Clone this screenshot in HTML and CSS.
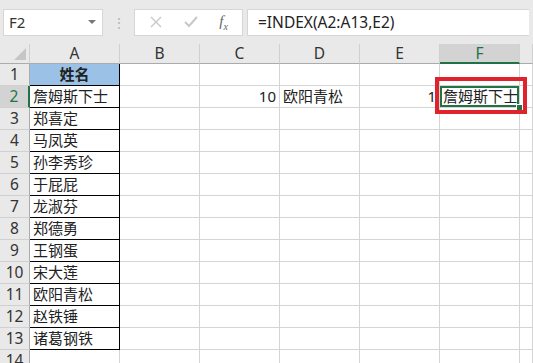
FILE: index.html
```html
<!DOCTYPE html>
<html lang="zh">
<head>
    <meta charset="UTF-8">
    <title>INDEX</title>
    <link rel="stylesheet" href="styles.css">
</head>
<body>
    <div class="bar">
        <div class="namebox">
            <span>F2</span>
            <span class="caret"></span>
        </div>
        <div class="dots">⋮</div>
        <div class="buttons">
            <svg width="14" height="14" viewBox="0 0 14 14"><path d="M2 2 L12 12 M12 2 L2 12" stroke="#c8c8c8" stroke-width="1.4" fill="none"/></svg>
            <svg width="16" height="14" viewBox="0 0 16 14"><path d="M2 7 L6 11 L14 2" stroke="#c8c8c8" stroke-width="2" fill="none"/></svg>
            <span class="fx"><i>f</i><sub>x</sub></span>
        </div>
        <div class="formula">=INDEX(A2:A13,E2)</div>
    </div>

    <div class="sheet">
        <div class="corner"><span class="tri"></span></div>
        <div class="colhead">A</div>
        <div class="colhead">B</div>
        <div class="colhead">C</div>
        <div class="colhead">D</div>
        <div class="colhead">E</div>
        <div class="colhead active">F</div>
        <div class="colhead"></div>

        <div class="rowhead">1</div>
        <div class="cell name title">姓名</div>
        <div class="cell"></div><div class="cell"></div><div class="cell"></div><div class="cell"></div><div class="cell"></div><div class="cell"></div>

        <div class="rowhead active">2</div>
        <div class="cell name">詹姆斯下士</div>
        <div class="cell"></div>
        <div class="cell num">10</div>
        <div class="cell">欧阳青松</div>
        <div class="cell num">1</div>
        <div class="cell selected">詹姆斯下士<span class="handle"></span><span class="mark"></span></div>
        <div class="cell"></div>

        <div class="rowhead">3</div><div class="cell name">郑喜定</div>
        <div class="cell"></div><div class="cell"></div><div class="cell"></div><div class="cell"></div><div class="cell"></div><div class="cell"></div>
        <div class="rowhead">4</div><div class="cell name">马凤英</div>
        <div class="cell"></div><div class="cell"></div><div class="cell"></div><div class="cell"></div><div class="cell"></div><div class="cell"></div>
        <div class="rowhead">5</div><div class="cell name">孙李秀珍</div>
        <div class="cell"></div><div class="cell"></div><div class="cell"></div><div class="cell"></div><div class="cell"></div><div class="cell"></div>
        <div class="rowhead">6</div><div class="cell name">于屁屁</div>
        <div class="cell"></div><div class="cell"></div><div class="cell"></div><div class="cell"></div><div class="cell"></div><div class="cell"></div>
        <div class="rowhead">7</div><div class="cell name">龙淑芬</div>
        <div class="cell"></div><div class="cell"></div><div class="cell"></div><div class="cell"></div><div class="cell"></div><div class="cell"></div>
        <div class="rowhead">8</div><div class="cell name">郑德勇</div>
        <div class="cell"></div><div class="cell"></div><div class="cell"></div><div class="cell"></div><div class="cell"></div><div class="cell"></div>
        <div class="rowhead">9</div><div class="cell name">王钢蛋</div>
        <div class="cell"></div><div class="cell"></div><div class="cell"></div><div class="cell"></div><div class="cell"></div><div class="cell"></div>
        <div class="rowhead">10</div><div class="cell name">宋大莲</div>
        <div class="cell"></div><div class="cell"></div><div class="cell"></div><div class="cell"></div><div class="cell"></div><div class="cell"></div>
        <div class="rowhead">11</div><div class="cell name">欧阳青松</div>
        <div class="cell"></div><div class="cell"></div><div class="cell"></div><div class="cell"></div><div class="cell"></div><div class="cell"></div>
        <div class="rowhead">12</div><div class="cell name">赵铁锤</div>
        <div class="cell"></div><div class="cell"></div><div class="cell"></div><div class="cell"></div><div class="cell"></div><div class="cell"></div>
        <div class="rowhead">13</div><div class="cell name">诸葛钢铁</div>
        <div class="cell"></div><div class="cell"></div><div class="cell"></div><div class="cell"></div><div class="cell"></div><div class="cell"></div>
        <div class="rowhead">14</div>
        <div class="cell"></div><div class="cell"></div><div class="cell"></div><div class="cell"></div><div class="cell"></div><div class="cell"></div><div class="cell"></div>
    </div>
</body>
</html>
```

FILE: styles.css
```css
body {
    margin: 0;
    width: 533px;
    height: 363px;
    overflow: hidden;
    background-color: #fff;
    font-family: 'Noto Sans', 'Noto Sans CJK SC', sans-serif;
    color: #222;
}

.bar {
    display: flex;
    align-items: center;
    height: 44px;
    padding: 0 0 0 3px;
    background-color: #e9e9e9;
    box-sizing: border-box;
}

.namebox {
    display: flex;
    align-items: center;
    justify-content: space-between;
    width: 100px;
    height: 27px;
    padding: 0 6px 0 5px;
    box-sizing: border-box;
    background-color: #fff;
    border: 1px solid #d6d6d6;
    font-size: 15px;
    color: #333;
}

    .namebox .caret {
        width: 0;
        height: 0;
        border-left: 4px solid transparent;
        border-right: 4px solid transparent;
        border-top: 4px solid #777;
    }

.dots {
    width: 31px;
    text-align: center;
    color: #b5b5b5;
    font-size: 14px;
}

.buttons {
    display: flex;
    align-items: center;
    justify-content: space-around;
    width: 109px;
    height: 27px;
    box-sizing: border-box;
    background-color: #fff;
    border: 1px solid #d6d6d6;
    padding: 0 4px;
}

.fx {
    font-family: 'Liberation Serif', serif;
    font-size: 15px;
    color: #666;
}

    .fx sub {
        font-size: 10px;
        font-style: italic;
    }

.formula {
    flex: 1;
    height: 27px;
    margin: 0 4px 0 4px;
    padding-left: 10px;
    box-sizing: border-box;
    background-color: #fff;
    border: 1px solid #d6d6d6;
    border-right: none;
    font-size: 15.5px;
    line-height: 25px;
    color: #222;
}

.sheet {
    display: grid;
    grid-template-columns: 30px 90px 80px 80px 80px 80px 80px 13px;
    grid-template-rows: 20px repeat(14, 22px);
    font-size: 15px;
}

.corner {
    position: relative;
    background-color: #e9e9e9;
    border-bottom: 1px solid #ababab;
    border-right: 1px solid #d0d0d0;
}

    .corner .tri {
        position: absolute;
        right: 3px;
        bottom: 3px;
        width: 0;
        height: 0;
        border-left: 12px solid transparent;
        border-bottom: 12px solid #c6c6c6;
    }

.colhead {
    background-color: #e9e9e9;
    border-bottom: 1px solid #ababab;
    border-right: 1px solid #d0d0d0;
    text-align: center;
    line-height: 19px;
    font-size: 15.5px;
    color: #333;
}

    .colhead.active {
        background-color: #d3d3d3;
        border-bottom: 2px solid #217346;
        color: #217346;
        line-height: 18px;
    }

.rowhead {
    background-color: #e9e9e9;
    border-bottom: 1px solid #d0d0d0;
    border-right: 1px solid #ababab;
    text-align: center;
    line-height: 21px;
    font-size: 15.5px;
    color: #333;
}

    .rowhead.active {
        background-color: #d3d3d3;
        border-right: 2px solid #217346;
        color: #217346;
    }

.cell {
    position: relative;
    border-right: 1px solid #d4d4d4;
    border-bottom: 1px solid #d4d4d4;
    padding: 0 3px;
    line-height: 21px;
    white-space: nowrap;
}

    .cell.num {
        text-align: right;
    }

    .cell.name {
        border-right-color: #000;
        border-bottom-color: #000;
    }

    .cell.title {
        background-color: #9bc2e6;
        font-weight: 700;
        text-align: center;
    }

    .cell.selected {
        box-shadow: inset 0 0 0 2px #217346;
    }

.handle {
    position: absolute;
    right: -4px;
    bottom: -4px;
    width: 5px;
    height: 5px;
    background-color: #217346;
    border: 1px solid #fff;
    z-index: 2;
}

.mark {
    position: absolute;
    left: -5px;
    top: -9px;
    right: -8px;
    bottom: -7px;
    border: 4px solid #e0222c;
    z-index: 3;
}
```
